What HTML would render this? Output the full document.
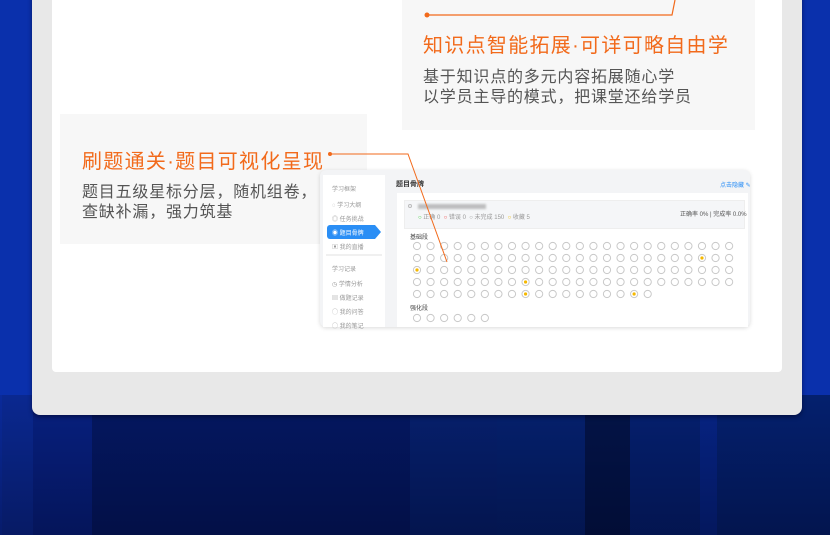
<!DOCTYPE html>
<html><head><meta charset="utf-8"><style>
*{margin:0;padding:0;box-sizing:border-box}
body{width:830px;height:535px;overflow:hidden;position:relative;background:#0a30ac;font-family:"Liberation Sans","Noto Sans CJK SC",sans-serif}
.a{position:absolute}
.stripes{left:0;top:395px;width:830px;height:140px;background:linear-gradient(90deg,#0a2a9a 0 2px,#0a2890 2px 33px,#072080 33px 92px,#041862 92px 410px,#06206e 410px 497px,#05216f 497px 585px,#031448 585px 630px,#052070 630px 700px,#062485 700px 717px,#04206e 717px)}
.shade{left:0;top:395px;width:830px;height:140px;background:linear-gradient(180deg,rgba(0,0,0,0) 0,rgba(0,0,20,.35) 100%)}
.title{color:#f26a1b;font-size:20px;white-space:nowrap;letter-spacing:1.3px}
.txt{color:#555;font-size:16px;line-height:20px;letter-spacing:0.8px;white-space:nowrap}
.s{font-size:6px;color:#999;white-space:nowrap}
</style></head><body>
<div class="a stripes"></div><div class="a shade"></div>
<div class="a" style="left:32px;top:-10px;width:770px;height:425px;background:#e8e8e8;border-radius:8px;box-shadow:0 2px 4px rgba(0,0,30,.5)"></div>
<div class="a" style="left:52px;top:-10px;width:730px;height:382px;background:#fff;border-radius:4px"></div>
<div class="a" style="left:402px;top:0;width:353px;height:130px;background:#f7f7f7"></div>
<div class="a" style="left:60px;top:114px;width:307px;height:130px;background:#f7f7f7"></div>
<div class="a title" style="left:423px;top:29px">知识点智能拓展·可详可略自由学</div>
<div class="a txt" style="left:423px;top:68px">基于知识点的多元内容拓展随心学<br>以学员主导的模式，把课堂还给学员</div>
<div class="a title" style="left:82px;top:145px">刷题通关·题目可视化呈现</div>
<div class="a txt" style="left:82px;top:183px">题目五级星标分层，随机组卷，<br>查缺补漏，强力筑基</div>
<div class="a" style="left:320px;top:170px;width:430px;height:157px;background:#f3f4f6;border-radius:6px;box-shadow:0 1px 4px rgba(0,0,0,.15)"></div>
<div class="a" style="left:323px;top:175px;width:62px;height:152px;background:#fff"></div>
<div class="a s" style="left:332px;top:184px">学习框架</div>
<div class="a s" style="left:332px;top:200px">◌ 学习大纲</div>
<div class="a s" style="left:332px;top:214px">◎ 任务挑战</div>
<div class="a" style="left:327px;top:225px;width:48px;height:14px;background:#2a8ef5;border-radius:3px 0 0 3px"></div>
<div class="a" style="left:375px;top:225px;width:0;height:0;border-top:7px solid transparent;border-bottom:7px solid transparent;border-left:6px solid #2a8ef5"></div>
<div class="a s" style="left:332px;top:228px;color:#fff">◉ 题目骨牌</div>
<div class="a s" style="left:332px;top:242px">▣ 我的直播</div>
<div class="a" style="left:326px;top:254px;width:56px;height:2px;background:#f0f0f0"></div>
<div class="a s" style="left:332px;top:264px">学习记录</div>
<div class="a s" style="left:332px;top:279px">◷ 学情分析</div>
<div class="a s" style="left:332px;top:293px">▤ 做题记录</div>
<div class="a s" style="left:332px;top:307px">◯ 我的问答</div>
<div class="a s" style="left:332px;top:321px">◯ 我的笔记</div>
<div class="a" style="left:396px;top:179px;font-size:7px;font-weight:bold;color:#333">题目骨牌</div>
<div class="a" style="left:720px;top:180px;font-size:6px;color:#2a8ef5">点击隐藏 ✎</div>
<div class="a" style="left:397px;top:193px;width:351px;height:134px;background:#fff"></div>
<div class="a" style="left:404px;top:200px;width:341px;height:29px;background:#f5f6f8;border:1px solid #eee"></div>
<div class="a" style="left:408px;top:204px;width:4px;height:4px;border:1px solid #bbb;border-radius:50%"></div>
<div class="a" style="left:418px;top:204px;width:68px;height:5px;background:#999;filter:blur(1px);opacity:.6"></div>
<div class="a s" style="left:418px;top:212px"><span style="color:#3c3">○</span> 正确 0 &nbsp;<span style="color:#e44">○</span> 错误 0 &nbsp;○ 未完成 150 &nbsp;<span style="color:#eb0">○</span> 收藏 5</div>
<div class="a s" style="left:680px;top:209px;color:#555">正确率 0% | 完成率 0.0%</div>
<div class="a" style="left:410px;top:232px;font-size:6px;color:#444">基础段</div>
<div class="a" style="left:410px;top:303px;font-size:6px;color:#444">强化段</div>
<svg class="a" style="left:0;top:0" width="830" height="535">
<g fill="none" stroke="#c8c8c8" stroke-width="1" id="g"></g>
<polyline points="427,15 672,15 675,0" fill="none" stroke="#f26a1b" stroke-width="1.2"/>
<circle cx="427" cy="15" r="2.5" fill="#f26a1b"/>
<polyline points="330,154 408,154 447,262" fill="none" stroke="#f26a1b" stroke-width="1"/>
<circle cx="330" cy="154" r="2" fill="#f26a1b"/>
</svg>
<script>
var g=document.getElementById('g'),h='';
var ys=[246,258,270,282,294],cnt=[24,24,24,24,18];
var yel={'1_21':1,'2_0':1,'3_8':1,'4_8':1,'4_16':1};
for(var r=0;r<5;r++)for(var c=0;c<cnt[r];c++){var x=417+c*13.57,y=ys[r];h+='<circle cx="'+x+'" cy="'+y+'" r="3.6"/>';if(yel[r+'_'+c])h+='<circle cx="'+x+'" cy="'+y+'" r="1.6" fill="#f5b800" stroke="none"/>';}
for(var c=0;c<6;c++)h+='<circle cx="'+(417+c*13.57)+'" cy="318" r="3.6"/>';
g.innerHTML=h;
</script>
</body></html>
